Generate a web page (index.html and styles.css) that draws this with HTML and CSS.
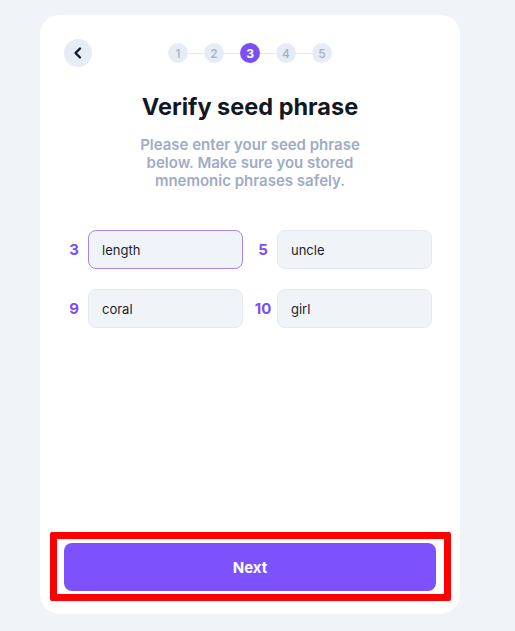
FILE: index.html
```html
<!DOCTYPE html>
<html>
<head>
<meta charset="utf-8">
<link rel="stylesheet" href="styles.css">
</head>
<body>
<div class="card">
  <div class="top">
    <button class="back" aria-label="Back">
      <svg width="14" height="14" viewBox="0 0 14 14"><path d="M9 2.5 L4.5 7 L9 11.5" fill="none" stroke="#111827" stroke-width="2.4" stroke-linecap="round" stroke-linejoin="round"/></svg>
    </button>
    <div class="steps">
      <span class="step">1</span><span class="line"></span>
      <span class="step">2</span><span class="line"></span>
      <span class="step active">3</span><span class="line"></span>
      <span class="step">4</span><span class="line"></span>
      <span class="step">5</span>
    </div>
  </div>
  <h1 class="title">Verify seed phrase</h1>
  <p class="sub">Please enter your seed phrase below. Make sure you stored mnemonic phrases safely.</p>
  <div class="grid">
    <div class="item"><span class="num">3</span><div class="field focus">length</div></div>
    <div class="item"><span class="num">5</span><div class="field">uncle</div></div>
    <div class="item"><span class="num">9</span><div class="field">coral</div></div>
    <div class="item"><span class="num">10</span><div class="field">girl</div></div>
  </div>
  <div class="actions">
    <button class="next">Next</button>
    <div class="highlight"></div>
  </div>
</div>
</body>
</html>
```
FILE: styles.css
```css
* { box-sizing: border-box; }
html, body { margin: 0; padding: 0; }
body {
  background: #f0f3f8;
  font-family: Inter, "Noto Sans", sans-serif;
  width: 515px;
  height: 631px;
  padding: 15px 0 0 40px;
}
.card {
  width: 420px;
  height: 599px;
  background: #ffffff;
  border-radius: 20px;
  padding: 24px 24px 23px 24px;
  display: flex;
  flex-direction: column;
}
.top {
  display: flex;
  align-items: center;
  height: 28px;
  position: relative;
}
.back {
  width: 28px;
  height: 28px;
  border-radius: 50%;
  border: none;
  background: #e6ecf6;
  padding: 0;
  display: flex;
  align-items: center;
  justify-content: center;
}
.steps {
  display: flex;
  align-items: center;
  margin-left: 76px;
}
.step {
  width: 20px;
  height: 20px;
  border-radius: 50%;
  background: #e6ecf6;
  color: #a3afc6;
  font-size: 12px;
  font-weight: 500;
  display: flex;
  align-items: center;
  justify-content: center;
}
.step.active {
  background: #7b4ff8;
  color: #ffffff;
  font-weight: 700;
}
.line {
  width: 16px;
  height: 1px;
  background: #e3e9f3;
}
.title {
  margin: 26px 0 0 0;
  text-align: center;
  font-size: 23.5px;
  font-weight: 700;
  color: #131722;
  line-height: 28px;
}
.sub {
  margin: 15px auto 0 auto;
  width: 250px;
  text-align: center;
  font-size: 15px;
  font-weight: 600;
  line-height: 18px;
  color: #a0acc6;
}
.grid {
  display: grid;
  grid-template-columns: 179px 179px;
  column-gap: 10px;
  row-gap: 20px;
  margin-top: 40px;
}
.item {
  display: flex;
  align-items: center;
  gap: 4px;
}
.num {
  width: 20px;
  text-align: center;
  color: #7b4ff8;
  font-weight: 700;
  font-size: 15px;
}
.field {
  width: 155px;
  height: 39px;
  border-radius: 8px;
  background: #f0f3f8;
  border: 1px solid #e4e9f2;
  display: flex;
  align-items: center;
  padding-left: 13px;
  font-size: 13px;
  color: #1c1f2b;
}
.field.focus {
  border-color: #a883fa;
}
.actions {
  margin-top: auto;
  position: relative;
  width: 372px;
}
.next {
  width: 372px;
  height: 48px;
  border: none;
  border-radius: 8px;
  background: #7d52fd;
  color: #ffffff;
  font-family: Inter, "Noto Sans", sans-serif;
  font-size: 15px;
  font-weight: 700;
  display: block;
}
.highlight {
  position: absolute;
  left: -14px;
  top: -11px;
  width: 401px;
  height: 69px;
  border: 7px solid #ff0000;
  border-radius: 2px;
}
```
